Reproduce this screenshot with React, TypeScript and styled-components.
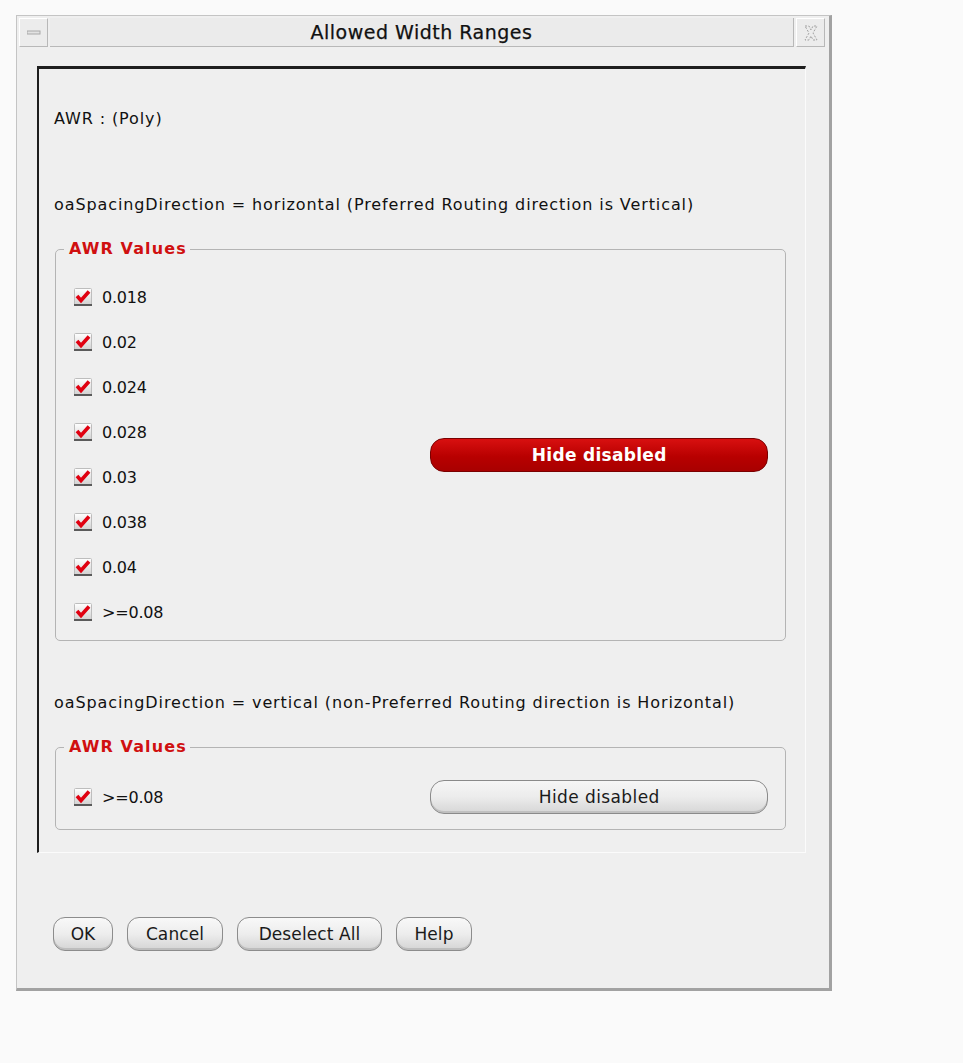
import React from "react";
import styled, { createGlobalStyle } from "styled-components";

const Global = createGlobalStyle`
  html, body { margin: 0; padding: 0; background: #fafafa; }
  body { font-family: "DejaVu Sans", "Open Sans", sans-serif; color: #111; }
`;

const Window = styled.div`
  margin: 15px 0 0 16px;
  width: 812px;
  height: 972px;
  background: #efefef;
  border-left: 1px solid #c4c4c4;
  border-top: 1px solid #c4c4c4;
  border-right: 3px solid #a2a2a2;
  border-bottom: 3px solid #a2a2a2;
  display: flex;
  flex-direction: column;
  box-sizing: content-box;
`;

const TitleBar = styled.div`
  margin: 2px 4px 0 2px;
  height: 29px;
  display: flex;
  gap: 2px;
`;

const TitleButton = styled.div`
  width: 29px;
  height: 29px;
  background: #ececec;
  border-right: 1px solid #b8b8b8;
  border-bottom: 1px solid #b8b8b8;
  border-top: 1px solid #fff;
  border-left: 1px solid #fff;
  box-sizing: border-box;
  display: flex;
  align-items: center;
  justify-content: center;
`;

const TitleText = styled.div`
  flex: 1;
  height: 29px;
  background: #ebebeb;
  border-bottom: 1px solid #b8b8b8;
  border-right: 1px solid #b8b8b8;
  box-sizing: border-box;
  display: flex;
  align-items: center;
  justify-content: center;
  font-size: 19px;
  letter-spacing: 0.5px;
  color: #111;
  -webkit-text-stroke: 0.25px #111;
`;

const Panel = styled.div`
  margin: 19px 0 0 20px;
  width: 732px;
  height: 783px;
  border-top: 3px solid #1e1e1e;
  border-left: 2px solid #1e1e1e;
  border-right: 1px solid #fbfbfb;
  border-bottom: 1px solid #fbfbfb;
  box-sizing: content-box;
  padding: 0 19px 0 15px;
  display: flex;
  flex-direction: column;
`;

const Line = styled.div<{ $top: number }>`
  margin-top: ${(p) => p.$top}px;
  font-size: 16px;
  line-height: 20px;
  letter-spacing: 0.9px;
  white-space: nowrap;
`;

const Group = styled.fieldset<{ $height: number }>`
  margin: 25px 0 0 1px;
  padding: 0;
  height: ${(p) => p.$height}px;
  border: 1px solid #b4b4b4;
  border-radius: 5px;
  box-sizing: border-box;
  min-width: 0;
`;

const Legend = styled.legend`
  margin-left: 8px;
  padding: 0 3px 0 5px;
  font-weight: bold;
  font-size: 16px;
  line-height: 18px;
  color: #d01010;
  letter-spacing: 1.1px;
`;

const GroupBody = styled.div<{ $top: number }>`
  display: flex;
  align-items: center;
  padding: ${(p) => p.$top}px 17px 0 18px;
`;

const CheckList = styled.div`
  display: flex;
  flex-direction: column;
  gap: 25px;
  width: 357px;
`;

const CheckRow = styled.label`
  display: flex;
  align-items: center;
  gap: 10px;
  height: 20px;
  font-size: 16px;
  letter-spacing: -0.2px;
`;

const PillButton = styled.div<{ $primary?: boolean }>`
  width: 338px;
  height: 34px;
  box-sizing: border-box;
  border-radius: 14px;
  display: flex;
  align-items: center;
  justify-content: center;
  font-size: 17px;
  ${(p) =>
    p.$primary
      ? `
    background: linear-gradient(#d81010, #b80000 55%, #a80000);
    border: 1px solid #7a0000;
    color: #fff;
    font-weight: bold;
    letter-spacing: 0.3px;
  `
      : `
    background: linear-gradient(#f6f6f6, #ececec 50%, #d6d6d6);
    border: 1px solid #8a8a8a;
    box-shadow: inset 0 -2px 0 #c0c0c0;
    color: #1a1a1a;
    letter-spacing: 0.4px;
  `}
`;

const Footer = styled.div`
  display: flex;
  gap: 14px;
  margin: 64px 0 0 36px;
`;

const DialogButton = styled.div<{ $w: number }>`
  width: ${(p) => p.$w}px;
  height: 34px;
  box-sizing: border-box;
  border-radius: 12px;
  border: 1px solid #8c8c8c;
  background: linear-gradient(#f8f8f8, #ededed 50%, #d4d4d4);
  box-shadow: inset 0 -2px 0 #bdbdbd;
  display: flex;
  align-items: center;
  justify-content: center;
  font-size: 17px;
  letter-spacing: 0.1px;
  color: #1a1a1a;
`;

const CheckBox = () => (
  <svg width="18" height="18" viewBox="0 0 18 18">
    <defs>
      <linearGradient id="cbg" x1="0" y1="0" x2="0" y2="1">
        <stop offset="0" stopColor="#ffffff" />
        <stop offset="1" stopColor="#cfcfcf" />
      </linearGradient>
    </defs>
    <rect x="0.5" y="0.5" width="17" height="17" rx="1" fill="url(#cbg)" stroke="#bdbdbd" />
    <rect x="0" y="16" width="18" height="2" fill="#5a5a5a" />
    <path d="M3 8 L7 12.5 L15 3.5" fill="none" stroke="#e00010" strokeWidth="3.6" strokeLinejoin="miter" />
  </svg>
);

const Minimize = () => (
  <svg width="14" height="6" viewBox="0 0 14 6">
    <rect x="0" y="1" width="13" height="3" fill="#e2e2e2" stroke="#a8a8a8" strokeWidth="1" />
  </svg>
);

const CloseIcon = () => (
  <svg width="16" height="18" viewBox="0 0 16 18">
    <path
      d="M2 2 L6 2 L8 6 L10 2 L14 2 L10 9 L14 16 L10 16 L8 12 L6 16 L2 16 L6 9 Z"
      fill="none"
      stroke="#a0a0a0"
      strokeWidth="1"
      strokeDasharray="2 1.5"
    />
  </svg>
);

const values = ["0.018", "0.02", "0.024", "0.028", "0.03", "0.038", "0.04", ">=0.08"];

export default function App() {
  return (
    <>
      <Global />
      <Window>
        <TitleBar>
          <TitleButton>
            <Minimize />
          </TitleButton>
          <TitleText>Allowed Width Ranges</TitleText>
          <TitleButton>
            <CloseIcon />
          </TitleButton>
        </TitleBar>
        <Panel>
          <Line $top={40}>AWR : (Poly)</Line>
          <Line $top={66}>oaSpacingDirection = horizontal (Preferred Routing direction is Vertical)</Line>
          <Group $height={401}>
            <Legend>AWR Values</Legend>
            <GroupBody $top={29}>
              <CheckList>
                {values.map((v) => (
                  <CheckRow key={v}>
                    <CheckBox />
                    {v}
                  </CheckRow>
                ))}
              </CheckList>
              <PillButton $primary>Hide disabled</PillButton>
            </GroupBody>
          </Group>
          <Line $top={52}>oaSpacingDirection = vertical (non-Preferred Routing direction is Horizontal)</Line>
          <Group $height={92}>
            <Legend>AWR Values</Legend>
            <GroupBody $top={24}>
              <CheckList>
                <CheckRow>
                  <CheckBox />
                  {">=0.08"}
                </CheckRow>
              </CheckList>
              <PillButton>Hide disabled</PillButton>
            </GroupBody>
          </Group>
        </Panel>
        <Footer>
          <DialogButton $w={60}>OK</DialogButton>
          <DialogButton $w={96}>Cancel</DialogButton>
          <DialogButton $w={145}>Deselect All</DialogButton>
          <DialogButton $w={76}>Help</DialogButton>
        </Footer>
      </Window>
    </>
  );
}
